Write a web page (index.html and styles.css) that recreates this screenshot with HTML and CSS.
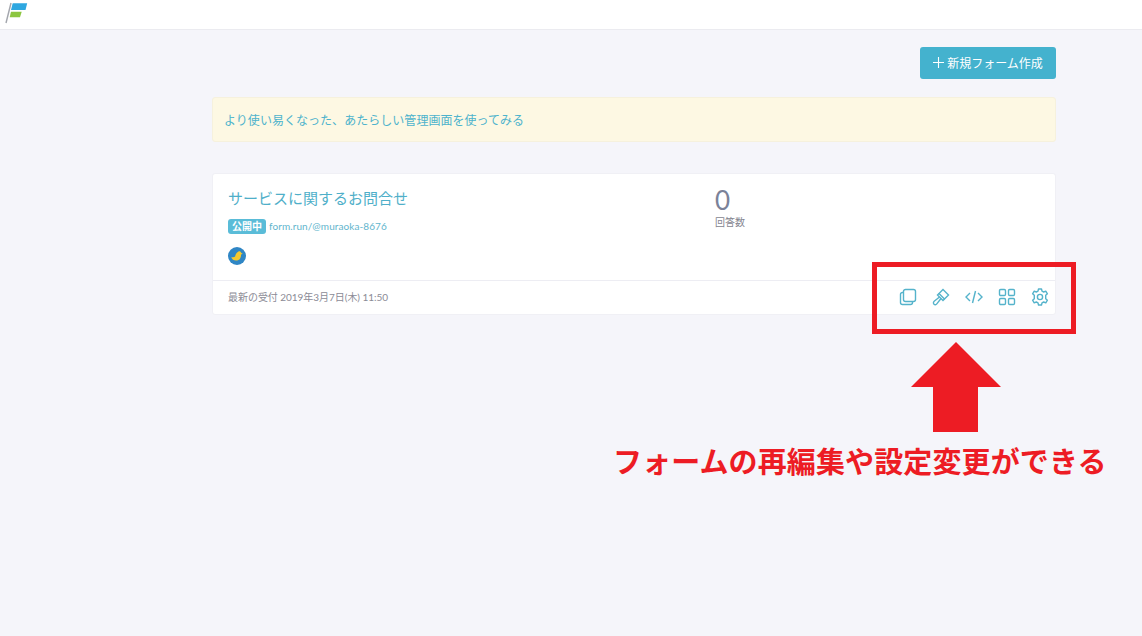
FILE: index.html
```html
<!DOCTYPE html>
<html lang="ja">
<head>
<meta charset="utf-8">
<title>フォーム一覧</title>
<link rel="stylesheet" href="styles.css">
</head>
<body>
<header class="topbar">
  <svg class="logo" width="24" height="24" viewBox="0 0 24 24">
    <path d="M6 2 L1 22" stroke="#a3a6ad" stroke-width="1.400" fill="none"/>
    <path d="M7.700 2.300 H22.200 L20.500 9 H6 Z" fill="#2ea7e0"/>
    <path d="M6 10.700 H16.700 L15 16.300 H4.700 Z" fill="#8cc63f"/>
  </svg>
</header>
<main class="content">
  <div class="actions">
    <a class="new-btn"><svg class="plus" viewBox="0 0 11 11"><path d="M5.500 0 V11 M0 5.500 H11"/></svg>新規フォーム作成</a>
  </div>
  <div class="notice">より使い易くなった、あたらしい管理画面を使ってみる</div>
  <section class="card">
    <div class="card-body">
      <div class="card-main">
        <h2 class="form-title">サービスに関するお問合せ</h2>
        <div class="form-meta"><span class="badge">公開中</span><span class="form-url">form.run/@muraoka-8676</span></div>
        <svg class="avatar" width="18" height="18" viewBox="0 0 19 19">
          <circle cx="9.500" cy="9.500" r="9.500" fill="#2f86c5"/>
          <path d="M3.500 10.500 C5 11 6.500 11 7.500 10 C7.800 8.500 8.500 6.500 10 5.500 C11.500 4 13.500 4.500 13.800 6.200 L15.500 7 L13.800 7.800 C13.800 10.500 13 13 10.500 14 C7.500 15 4 13.500 3.500 10.500 Z" fill="#f5c92e"/>
        </svg>
      </div>
      <div class="stat">
        <div class="stat-num">0</div>
        <div class="stat-label">回答数</div>
      </div>
    </div>
    <div class="card-foot">
      <span class="last">最新の受付 2019年3月7日(木) 11:50</span>
      <div class="tools">
        <svg class="tool" viewBox="0 0 18 18"><rect x="4.500" y="1.500" width="12" height="12" rx="2"/><path d="M4.500 4.500 H3.500 A2 2 0 0 0 1.500 6.500 V14.500 A2 2 0 0 0 3.500 16.500 H11.500 A2 2 0 0 0 13.500 14.500 V13.500"/></svg>
        <svg class="tool" viewBox="0 0 18 18"><path d="M11 1.500 L16.500 7 L12.500 11 L7 5.500 Z"/><path d="M7 5.500 L5.500 7 L11 12.500 L12.500 11"/><path d="M7.500 9 L2.200 13.300 C1.200 14.200 1.200 15.500 2 16.200 C2.800 17 4 16.900 4.800 15.900 L9 10.500"/></svg>
        <svg class="tool" viewBox="0 0 18 18"><path d="M5 5 L1 9 L5 13"/><path d="M13 5 L17 9 L13 13"/><path d="M10.500 3 L7.500 15"/></svg>
        <svg class="tool" viewBox="0 0 18 18"><rect x="1.500" y="1.500" width="6" height="6" rx="1.200"/><rect x="10.500" y="1.500" width="6" height="6" rx="1.200"/><rect x="1.500" y="10.500" width="6" height="6" rx="1.200"/><rect x="10.500" y="10.500" width="6" height="6" rx="1.200"/></svg>
        <svg class="tool" viewBox="0 0 18 18"><circle cx="9" cy="9" r="2.600"/><path d="M7.500 1 H10.500 L11 3.200 L12.700 4 L14.800 3.200 L16.400 5.800 L14.700 7.300 V10.700 L16.400 12.200 L14.800 14.800 L12.700 14 L11 14.800 L10.500 17 H7.500 L7 14.800 L5.300 14 L3.200 14.800 L1.600 12.200 L3.300 10.700 V7.300 L1.600 5.800 L3.200 3.200 L5.300 4 L7 3.200 Z" stroke-linejoin="round"/></svg>
      </div>
    </div>
  </section>
</main>
<div class="callout-box"></div>
<svg class="callout-arrow" width="90" height="90" viewBox="0 0 90 90"><path d="M45 0 L90 45 H67 V90 H22 V45 H0 Z" fill="#ed1c24"/></svg>
<p class="callout-text">フォームの再編集や設定変更ができる</p>
</body>
</html>
```
FILE: styles.css
```css
* { box-sizing: border-box; }
html, body { margin: 0; padding: 0; }
body {
  height: 636px;
  overflow: hidden;
  position: relative;
  background: #f5f5fa;
  font-family: "Lato", "Noto Sans CJK JP", sans-serif;
  color: #4db3cc;
}
.topbar {
  height: 30px;
  background: #fff;
  border-bottom: 1px solid #ebebf0;
  padding: 1px 0 0 5px;
}
.logo { display: block; }
.content {
  width: 844px;
  margin-left: 212px;
  padding-top: 17px;
}
.actions { display: flex; justify-content: flex-end; }
.new-btn {
  width: 136px;
  height: 32px;
  padding-bottom: 2px;
  background: #44b2ce;
  border-radius: 3px;
  color: #fff;
  font-size: 12px;
  display: flex;
  align-items: center;
  justify-content: center;
  gap: 3px;
}
.plus {
  width: 11px;
  height: 11px;
  fill: none;
  stroke: #fff;
  stroke-width: 1.100;
}
.notice {
  margin-top: 18px;
  height: 45px;
  padding: 0 0 1px 11px;
  background: #fdf8e3;
  border: 1px solid #f6f1dd;
  border-radius: 3px;
  display: flex;
  align-items: center;
  font-size: 12px;
  letter-spacing: .04px;
  color: #4db3cc;
}
.card {
  margin-top: 31px;
  height: 142px;
  background: #fff;
  border: 1px solid #f0f0f5;
  border-radius: 3px;
  display: flex;
  flex-direction: column;
}
.card-body {
  height: 107px;
  border-bottom: 1px solid #ededf3;
  display: flex;
  padding: 13px 15px 0;
}
.card-main { width: 487px; }
.form-title {
  margin: 0;
  font-size: 15px;
  font-weight: 400;
  line-height: 22px;
  color: #4fafc9;
}
.form-meta {
  margin-top: 9px;
  height: 16px;
  display: flex;
  align-items: center;
  gap: 3px;
}
.badge {
  width: 38px;
  height: 15px;
  border-radius: 3px;
  background: #5abcd8;
  color: #fff;
  font-size: 10px;
  font-weight: 700;
  line-height: 15px;
  text-align: center;
}
.form-url { font-size: 10px; letter-spacing: .09px; color: #62b5cd; }
.avatar { display: block; margin-top: 13px; }
.stat-num { font-size: 26px; line-height: 26px; color: #7b8299; }
.stat-label { margin-top: 2px; font-size: 10px; line-height: 14px; color: #85858f; }
.card-foot {
  flex: 1;
  display: flex;
  align-items: center;
  justify-content: space-between;
  padding: 0 6px 2px 15px;
}
.last { font-size: 10px; letter-spacing: -.04px; color: #8b8b96; }
.tools { display: flex; gap: 15px; }
.tool {
  width: 18px;
  height: 18px;
  fill: none;
  stroke: #55b3cb;
  stroke-width: 1.400;
}
.callout-box {
  position: absolute;
  left: 872px;
  top: 262px;
  width: 204px;
  height: 72px;
  border: 5px solid #ed1c24;
}
.callout-arrow { position: absolute; left: 911px; top: 342px; }
.callout-text {
  position: absolute;
  left: 613px;
  top: 442px;
  margin: 0;
  font-size: 29px;
  letter-spacing: .12px;
  line-height: 40px;
  font-weight: 700;
  color: #ed1c24;
  white-space: nowrap;
}
```
